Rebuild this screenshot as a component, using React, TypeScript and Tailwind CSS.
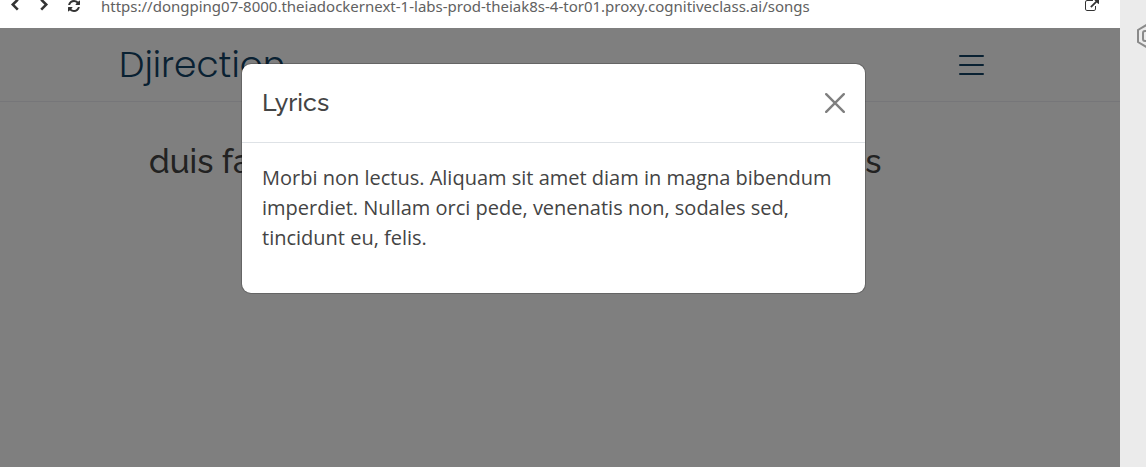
import React from "react";

function BrowserBar() {
  return (
    <div className="h-7 shrink-0 bg-white text-[#333]">
      <div className="flex h-3 items-center pl-2 pr-[21px]">
        <button type="button" aria-label="Back" className="h-4 w-4">
          <svg viewBox="0 0 16 16" className="block h-4 w-4" fill="none" stroke="currentColor" strokeWidth="2.6">
            <path d="M9.8 1.600 4.8 6.600l5 5" />
          </svg>
        </button>
        <button type="button" aria-label="Forward" className="ml-3 h-4 w-4">
          <svg viewBox="0 0 16 16" className="block h-4 w-4" fill="none" stroke="currentColor" strokeWidth="2.6">
            <path d="M5.200 1.600 10.200 6.600l-5 5" />
          </svg>
        </button>
        <button type="button" aria-label="Reload" className="ml-4 h-4 w-4">
          <svg viewBox="0 0 1536 1792" className="block h-[14px] w-3" fill="currentColor">
            <path d="M1511 1056q0 5-1 7-64 268-268 434.500T764 1664q-146 0-282.500-55T238 1452l-129 129q-19 19-45 19t-45-19-19-45v-448q0-26 19-45t45-19h448q26 0 45 19t19 45-19 45l-137 137q71 66 161 102t187 36q134 0 250-65t186-179q11-17 53-117 8-23 30-23h192q13 0 22.500 9.500t9.500 22.500zm25-800v448q0 26-19 45t-45 19h-448q-26 0-45-19t-19-45 19-45l138-138Q969 384 768 384q-134 0-250 65T332 628q-11 17-53 117-8 23-30 23H50q-13 0-22.500-9.500T18 736v-7q65-268 270-434.500T768 128q146 0 284 55.500T1297 340l130-129q19-19 45-19t45 19 19 45z" />
          </svg>
        </button>
        <input
          aria-label="Address"
          className="ml-[17px] h-7 min-w-0 flex-1 bg-transparent font-['Noto_Sans',sans-serif] text-[15px] text-[#616161] outline-none"
          defaultValue="https://dongping07-8000.theiadockernext-1-labs-prod-theiak8s-4-tor01.proxy.cognitiveclass.ai/songs"
        />
        <a href="#open" aria-label="Open in new window">
          <svg viewBox="0 0 1792 1792" className="block h-[14px] w-[14px]" fill="currentColor">
            <path d="M1408 928v320q0 119-84.500 203.500T1120 1536H288q-119 0-203.500-84.500T0 1248V416q0-119 84.500-203.500T288 128h704q14 0 23 9t9 23v64q0 14-9 23t-23 9H288q-66 0-113 47t-47 113v832q0 66 47 113t113 47h832q66 0 113-47t47-113V928q0-14 9-23t23-9h64q14 0 23 9t9 23zm384-864v512q0 26-19 45t-45 19-45-19l-176-176-652 652q-10 10-23 10t-23-10L695 983q-10-10-10-23t10-23l652-652-176-176q-19-19-19-45t19-45 45-19h512q26 0 45 19t19 45z" />
          </svg>
        </a>
      </div>
    </div>
  );
}

function LyricsDialog() {
  return (
    <div className="absolute inset-0 flex items-start justify-center bg-black/50 pt-[35px] pr-[13px]">
      <section
        role="dialog"
        aria-labelledby="lyrics-title"
        className="w-full max-w-[625px] rounded-[10px] border border-black/20 bg-white bg-clip-padding text-[#444]"
      >
        <header className="flex h-[79px] items-center justify-between border-b border-[#dee2e6] px-5">
          <h2 id="lyrics-title" className="pb-0.5 font-['Raleway','Lato',sans-serif] text-[25px] leading-[38px] font-medium">Lyrics</h2>
          <button type="button" aria-label="Close" className="text-black/50">
            <svg viewBox="0 0 20 20" className="block h-5 w-5" fill="none" stroke="currentColor" strokeWidth="2.4" strokeLinecap="round">
              <path d="M1.2 1.200 18.800 18.800M18.800 1.200 1.200 18.800" />
            </svg>
          </button>
        </header>
        <div className="px-5 pt-5 pb-10 text-[20px] leading-[30px]">
          <p>
            Morbi non lectus. Aliquam sit amet diam in magna bibendum imperdiet. Nullam orci pede, venenatis non, sodales sed, tincidunt eu, felis.
          </p>
        </div>
      </section>
    </div>
  );
}

export default function App() {
  return (
    <div className="flex min-h-screen bg-[#ebebeb] font-['Open_Sans',sans-serif]">
      <div className="flex min-w-0 flex-1 flex-col">
        <BrowserBar />
        <main className="relative flex-1 overflow-hidden bg-white">
          <header className="flex h-[74px] items-center justify-between border-b border-[#ececf2] pr-[136px] pl-[119px]">
            <a href="#home" className="font-['Poppins','Inter',sans-serif] text-[36px] font-light text-[#124265]">
              Djirection
            </a>
            <button type="button" aria-label="Menu" className="text-[#124265]">
              <svg viewBox="0 0 26 22" className="block h-[22px] w-[26px]" stroke="currentColor" strokeWidth="2" strokeLinecap="round">
                <path d="M2 2h23M2 11h23M2 20h23" />
              </svg>
            </button>
          </header>
          <h1 className="pt-9 pl-[149px] font-['Raleway','Lato',sans-serif] text-[33px] leading-[48px] font-medium whitespace-nowrap text-[#444]">
            duis faucibus accumsan erat curabitur convallis
          </h1>
          <LyricsDialog />
        </main>
      </div>
      <aside className="w-[26px] shrink-0 overflow-hidden pt-[22px] pl-4">
        <svg viewBox="0 0 26 28" className="h-7 w-[26px] max-w-none" fill="none" stroke="#8a8a8a" strokeWidth="2">
          <path d="M13 1.500 24 8v12l-11 6.500L2 20V8z" />
          <rect x="7" y="9" width="12" height="10" rx="2" />
        </svg>
      </aside>
    </div>
  );
}
